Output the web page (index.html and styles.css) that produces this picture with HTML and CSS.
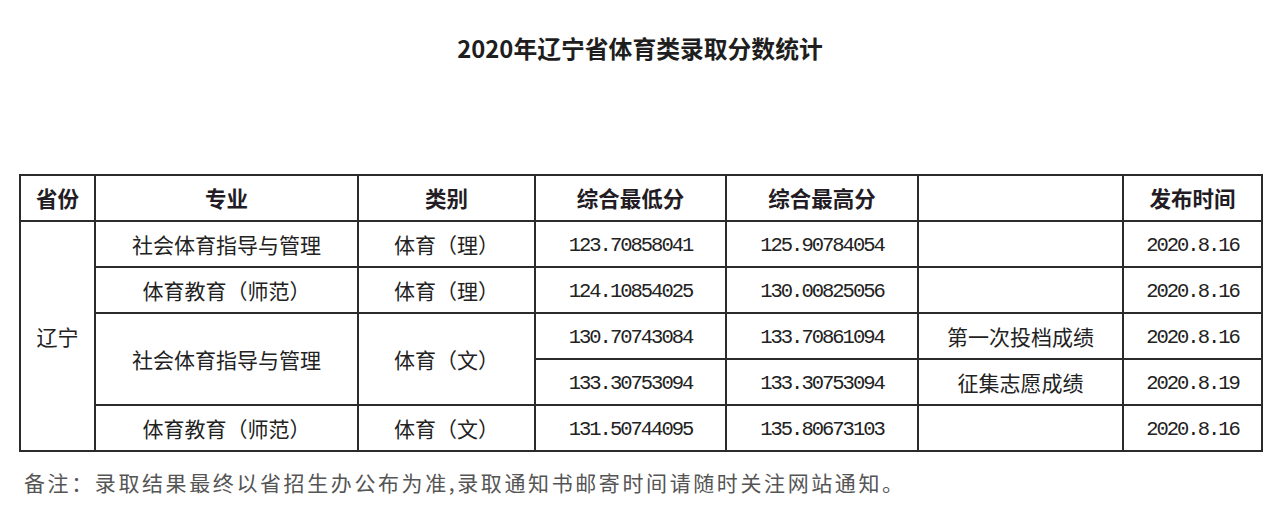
FILE: index.html
```html
<!DOCTYPE html>
<html lang="zh-CN">
<head>
<meta charset="utf-8">
<title>2020年辽宁省体育类录取分数统计</title>
<link rel="stylesheet" href="styles.css">
</head>
<body>
<div class="page">
  <h1 class="title">2020年辽宁省体育类录取分数统计</h1>
  <table class="scores">
    <colgroup>
      <col class="c-prov">
      <col class="c-major">
      <col class="c-type">
      <col class="c-min">
      <col class="c-max">
      <col class="c-note">
      <col class="c-date">
    </colgroup>
    <thead>
      <tr>
        <th>省份</th>
        <th>专业</th>
        <th>类别</th>
        <th>综合最低分</th>
        <th>综合最高分</th>
        <th></th>
        <th>发布时间</th>
      </tr>
    </thead>
    <tbody>
      <tr>
        <td rowspan="5">辽宁</td>
        <td>社会体育指导与管理</td>
        <td>体育（理）</td>
        <td class="num">123.70858041</td>
        <td class="num">125.90784054</td>
        <td></td>
        <td class="num">2020.8.16</td>
      </tr>
      <tr>
        <td>体育教育（师范）</td>
        <td>体育（理）</td>
        <td class="num">124.10854025</td>
        <td class="num">130.00825056</td>
        <td></td>
        <td class="num">2020.8.16</td>
      </tr>
      <tr>
        <td rowspan="2">社会体育指导与管理</td>
        <td rowspan="2">体育（文）</td>
        <td class="num">130.70743084</td>
        <td class="num">133.70861094</td>
        <td>第一次投档成绩</td>
        <td class="num">2020.8.16</td>
      </tr>
      <tr>
        <td class="num">133.30753094</td>
        <td class="num">133.30753094</td>
        <td>征集志愿成绩</td>
        <td class="num">2020.8.19</td>
      </tr>
      <tr>
        <td>体育教育（师范）</td>
        <td>体育（文）</td>
        <td class="num">131.50744095</td>
        <td class="num">135.80673103</td>
        <td></td>
        <td class="num">2020.8.16</td>
      </tr>
    </tbody>
  </table>
  <p class="remark">备注：录取结果最终以省招生办公布为准,录取通知书邮寄时间请随时关注网站通知。</p>
</div>
</body>
</html>
```
FILE: styles.css
```css
html, body {
  margin: 0;
  padding: 0;
  background: #ffffff;
}

.page {
  width: 1280px;
  height: 512px;
  overflow: hidden;
  font-family: "Noto Sans CJK SC", "Noto Sans", sans-serif;
  color: #222;
}

.title {
  margin: 0;
  padding-top: 33px;
  height: 30px;
  line-height: 30px;
  font-size: 23.8px;
  font-weight: 700;
  text-align: center;
  color: #1e1e1e;
}

.scores {
  margin: 111px 0 0 19px;
  width: 1242px;
  border-collapse: collapse;
  table-layout: fixed;
}

.c-prov { width: 75px; }
.c-major { width: 263px; }
.c-type { width: 177px; }
.c-min { width: 191px; }
.c-max { width: 192px; }
.c-note { width: 205px; }
.c-date { width: 139px; }

.scores th,
.scores td {
  border: 2px solid #2b2b2b;
  height: 44px;
  padding: 0;
  text-align: center;
  vertical-align: middle;
  font-size: 21px;
  line-height: 24px;
  color: #222;
  white-space: nowrap;
}

.scores th {
  font-size: 21.5px;
  font-weight: 700;
  color: #231c24;
}

.scores td.num {
  font-family: "Liberation Mono", "DejaVu Sans Mono", monospace;
  font-size: 20.5px;
  letter-spacing: -2px;
  padding-top: 3px;
  height: 41px;
  color: #222;
}

.remark {
  margin: 17px 0 0 24px;
  font-size: 21px;
  line-height: 26px;
  letter-spacing: 2.6px;
  color: #555;
  white-space: nowrap;
}
```
